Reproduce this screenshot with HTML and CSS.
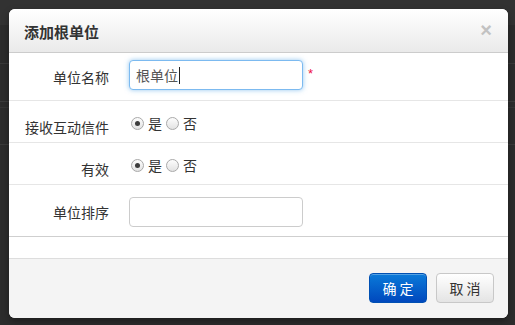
FILE: index.html
```html
<!DOCTYPE html>
<html lang="zh-CN">
<head>
<meta charset="utf-8">
<title>添加根单位</title>
<link rel="stylesheet" href="styles.css">
</head>
<body>
<div class="modal">
  <div class="modal-header">
    <h3 class="title">添加根单位</h3>
    <span class="close">×</span>
  </div>
  <div class="modal-body">
    <div class="row row-name">
      <label class="label">单位名称</label>
      <div class="control">
        <div class="input is-focus"><span class="value">根单位</span><span class="caret"></span></div>
        <span class="req">*</span>
      </div>
    </div>
    <div class="row row-radio">
      <label class="label">接收互动信件</label>
      <div class="control radios">
        <span class="radio is-checked"></span><span class="opt">是</span>
        <span class="radio"></span><span class="opt">否</span>
      </div>
    </div>
    <div class="row row-radio">
      <label class="label">有效</label>
      <div class="control radios">
        <span class="radio is-checked"></span><span class="opt">是</span>
        <span class="radio"></span><span class="opt">否</span>
      </div>
    </div>
    <div class="row row-order">
      <label class="label">单位排序</label>
      <div class="control">
        <div class="input"></div>
      </div>
    </div>
  </div>
  <div class="modal-footer">
    <button class="btn btn-primary">确 定</button>
    <button class="btn">取 消</button>
  </div>
</div>
</body>
</html>
```
FILE: styles.css
```css
* { box-sizing: border-box; }
html, body { margin: 0; height: 100%; }
body {
  padding: 9px 7px 7px 9px;
  background-color: #2c2c2c;
  background-image:
    linear-gradient(to bottom, #323232 0, #323232 25px, transparent 25px),
    linear-gradient(to bottom, transparent 63px, #3a3a3a 63px, #3a3a3a 64px, transparent 64px),
    linear-gradient(to bottom, transparent 101px, #3c3c3c 101px, #3c3c3c 102px, transparent 102px),
    linear-gradient(to bottom, transparent 107px, #353535 107px, #353535 108px, transparent 108px),
    linear-gradient(to bottom, transparent 144px, #3a3a3a 144px, #3a3a3a 145px, transparent 145px);
  font-family: "Noto Sans CJK SC", "Liberation Sans", sans-serif;
  font-size: 14px;
  color: #333;
}
.modal {
  width: 499px;
  height: 309px;
  background: #fff;
  border-radius: 6px;
  box-shadow: 0 3px 7px rgba(0,0,0,0.35);
  overflow: hidden;
  display: flex;
  flex-direction: column;
}
.modal-header {
  height: 44px;
  flex: none;
  display: flex;
  align-items: center;
  justify-content: space-between;
  padding: 0 16px 0 15px;
  background: linear-gradient(to bottom, #ffffff, #eaeaea);
  border-bottom: 1px solid #cccccc;
}
.title {
  margin: 0;
  font-size: 15px;
  font-weight: bold;
  color: #333;
  line-height: 20px;
  padding-top: 2px;
}
.close {
  font-family: "Liberation Sans", sans-serif;
  font-size: 20px;
  font-weight: bold;
  line-height: 20px;
  color: #c2c2c2;
  padding-bottom: 2px;
}
.modal-body {
  flex: none;
  padding-bottom: 21px;
}
.row {
  display: flex;
  align-items: flex-start;
  gap: 20px;
  border-bottom: 1px solid #e6e6e6;
}
.label {
  width: 100px;
  flex: none;
  text-align: right;
  line-height: 20px;
  color: #333;
}
.control {
  display: flex;
  align-items: center;
}
.row-name { padding: 7px 0 10px; }
.row-name .label { padding-top: 7px; }
.row-radio { padding: 12px 0 9px; height: 42px; }
.row-radio .label { padding-top: 4px; }
.row-order { padding: 12px 0 9px; border-bottom-color: #cfcfcf; }
.row-order .label { padding-top: 5px; }
.input {
  width: 174px;
  height: 30px;
  border: 1px solid #cccccc;
  border-radius: 4px;
  padding: 0 6px;
  display: flex;
  align-items: center;
  color: #555;
  font-size: 14px;
  background: #fff;
}
.input.is-focus {
  border-color: #7cbaf0;
  box-shadow: 0 0 5px rgba(102,175,233,0.7);
}
.value { line-height: 20px; }
.caret {
  width: 1px;
  height: 17px;
  background: #222;
  margin-left: 1px;
}
.req {
  color: #ee1144;
  font-family: "Liberation Sans", sans-serif;
  font-size: 13px;
  margin-left: 5px;
  align-self: flex-start;
  margin-top: 6px;
}
.radios {
  height: 20px;
  padding-left: 2px;
}
.radio {
  width: 13px;
  height: 13px;
  border-radius: 50%;
  border: 1px solid #a9a9a9;
  background: linear-gradient(to bottom, #fdfdfd, #e2e2e2);
  display: flex;
  align-items: center;
  justify-content: center;
  flex: none;
}
.radio.is-checked::after {
  content: "";
  width: 5px;
  height: 5px;
  border-radius: 50%;
  background: #3c3c3c;
}
.opt {
  margin-left: 4px;
  margin-right: 4px;
  line-height: 20px;
  color: #333;
}
.modal-footer {
  flex: 1;
  background: #f4f4f4;
  border-top: 1px solid #dddddd;
  display: flex;
  justify-content: flex-end;
  align-items: flex-start;
  gap: 9px;
  padding: 14px 14px 0;
}
.btn {
  width: 58px;
  height: 30px;
  border-radius: 4px;
  border: 1px solid #c8c8c8;
  background: linear-gradient(to bottom, #ffffff, #e4e4e4);
  font-family: "Noto Sans CJK SC", "Liberation Sans", sans-serif;
  font-size: 14px;
  color: #333;
  padding: 0;
  line-height: 28px;
  box-shadow: inset 0 1px 0 rgba(255,255,255,0.3);
}
.btn-primary {
  border-color: #0050b3;
  background: linear-gradient(to bottom, #0a7ad9, #0048bd);
  color: #fff;
}
```
